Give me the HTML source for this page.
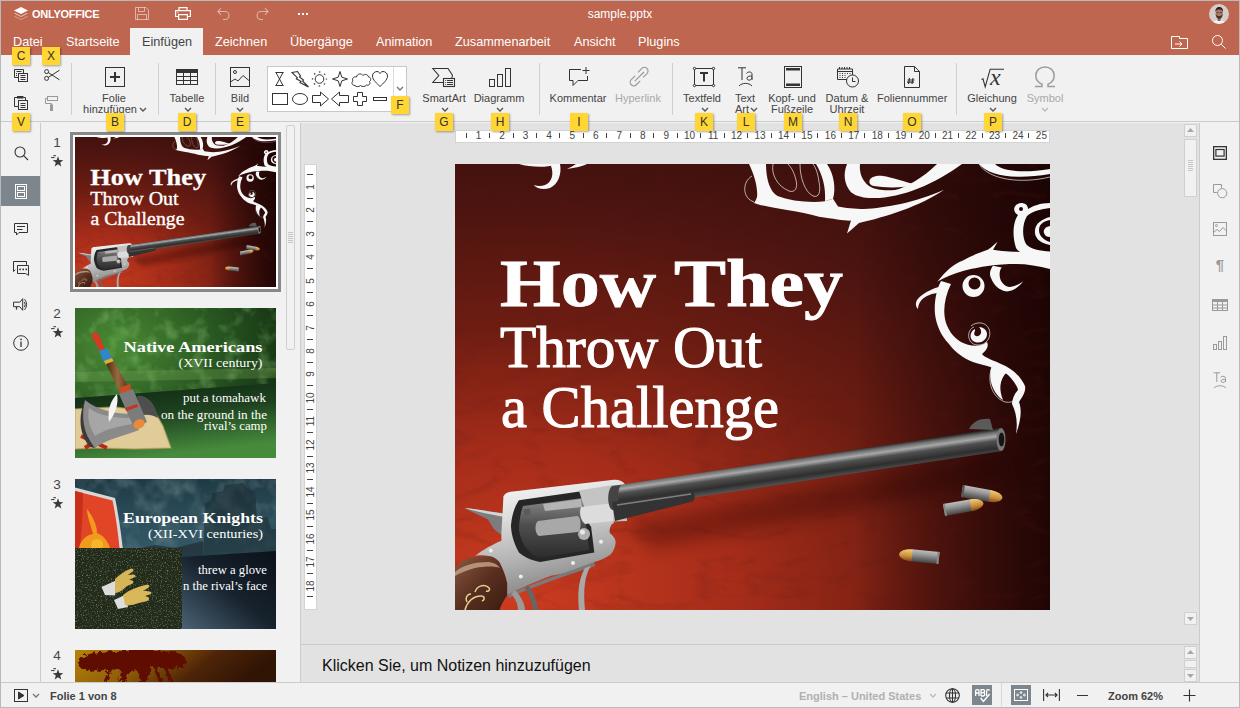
<!DOCTYPE html>
<html><head><meta charset="utf-8">
<style>
*{box-sizing:border-box;margin:0;padding:0}
html,body{width:1240px;height:708px;overflow:hidden;background:#f1f1f1;font-family:"Liberation Sans",sans-serif;}
.a{position:absolute}
#frame{position:absolute;left:0;top:0;width:1240px;height:708px;border:1px solid #b9b9b9;pointer-events:none;z-index:100}
#hdr{left:0;top:0;width:1240px;height:55px;background:#be664f}
.tab{position:absolute;top:34.6px;font-size:12.7px;color:#fff;white-space:nowrap}
#tabact{left:130px;top:28px;width:73px;height:27px;background:#f1f1f1}
#tb{left:0;top:55px;width:1240px;height:67px;background:#f1f1f1;border-bottom:1px solid #cbcbcb}
.sep{position:absolute;top:63px;width:1px;height:52px;background:#d0d0d0}
.lbl{position:absolute;font-size:11px;color:#444;white-space:nowrap;line-height:11px;text-align:center}
.dis{color:#a9a9a9}
.kt{position:absolute;width:18px;height:18px;background:#ffd633;color:#333;font-size:12px;line-height:18px;text-align:center;box-shadow:1px 1px 2px rgba(0,0,0,.35);z-index:50}
.chev{position:absolute;width:8px;height:5px;stroke-width:1.4}
svg{position:absolute;overflow:visible}
.sn{position:absolute;left:49px;width:16px;text-align:center;font-size:13.5px;line-height:14px;color:#444}
.rn{position:absolute;width:20px;height:10px;text-align:center;font-size:10px;line-height:10px;color:#444}
#side{left:0;top:123px;width:41px;height:559px;background:#f1f1f1;border-right:1px solid #cbcbcb}
#thumbs{left:41px;top:123px;width:260px;height:559px;background:#f1f1f1;border-right:1px solid #cbcbcb;overflow:hidden}
#canvas{left:301px;top:123px;width:898px;height:521px;background:#e2e2e2}
#notes{left:301px;top:644px;width:898px;height:38px;background:#e2e2e2;border-top:1px solid #cbcbcb}
#rpanel{left:1199px;top:123px;width:41px;height:559px;background:#f1f1f1;border-left:1px solid #cbcbcb}
#status{left:0;top:682px;width:1240px;height:26px;background:#f1f1f1;border-top:1px solid #cbcbcb}
</style></head><body>
<div id="frame"></div>
<svg width="0" height="0" style="position:absolute;left:0;top:0">
<defs>
  <radialGradient id="s1bg" cx="60" cy="430" r="760" gradientUnits="userSpaceOnUse" gradientTransform="translate(60 430) scale(1 0.64) translate(-60 -430)">
    <stop offset="0" stop-color="#cc3c20"/>
    <stop offset="0.3" stop-color="#a42c19"/>
    <stop offset="0.55" stop-color="#6e1d12"/>
    <stop offset="0.8" stop-color="#4c1410"/>
    <stop offset="1" stop-color="#3a0f0c"/>
  </radialGradient>
  <linearGradient id="s1top" gradientUnits="userSpaceOnUse" x1="400" y1="0" x2="595" y2="0">
    <stop offset="0" stop-color="#180303" stop-opacity="0"/>
    <stop offset="0.5" stop-color="#180303" stop-opacity=".45"/>
    <stop offset="1" stop-color="#180303" stop-opacity=".88"/>
  </linearGradient>
  <linearGradient id="barrel" gradientUnits="userSpaceOnUse" x1="350" y1="292" x2="353.5" y2="317">
    <stop offset="0" stop-color="#2a2a2a"/>
    <stop offset="0.12" stop-color="#6e6e6e"/>
    <stop offset="0.28" stop-color="#a8a8a8"/>
    <stop offset="0.45" stop-color="#505050"/>
    <stop offset="0.75" stop-color="#2e2e2e"/>
    <stop offset="1" stop-color="#555"/>
  </linearGradient>
  <linearGradient id="gframe" x1="0" y1="0" x2="0.3" y2="1">
    <stop offset="0" stop-color="#ffffff"/>
    <stop offset="0.35" stop-color="#dedede"/>
    <stop offset="0.7" stop-color="#b4b4b4"/>
    <stop offset="1" stop-color="#8a8a8a"/>
  </linearGradient>
  <linearGradient id="cyl" x1="0" y1="0" x2="0" y2="1">
    <stop offset="0" stop-color="#8a8a8a"/>
    <stop offset="0.45" stop-color="#4e4e4e"/>
    <stop offset="1" stop-color="#2c2c2c"/>
  </linearGradient>
  <linearGradient id="grip" x1="0" y1="0" x2="1" y2="1">
    <stop offset="0" stop-color="#8a5a44"/>
    <stop offset="0.5" stop-color="#5a3020"/>
    <stop offset="1" stop-color="#3a1c10"/>
  </linearGradient>
  <linearGradient id="bul" x1="0" y1="0" x2="0" y2="1">
    <stop offset="0" stop-color="#bdbdbd"/>
    <stop offset="0.35" stop-color="#9a9a9a"/>
    <stop offset="0.7" stop-color="#6a6a6a"/>
    <stop offset="1" stop-color="#454545"/>
  </linearGradient>
  <linearGradient id="tip" x1="0" y1="0" x2="0" y2="1">
    <stop offset="0" stop-color="#f5cf7a"/>
    <stop offset="0.6" stop-color="#c98d3a"/>
    <stop offset="1" stop-color="#7a4a18"/>
  </linearGradient>
  <filter id="s1tex" x="0" y="0" width="100%" height="100%">
    <feTurbulence type="turbulence" baseFrequency="0.012 0.03" numOctaves="4" seed="9"/>
    <feColorMatrix type="matrix" values="0 0 0 0 0.1  0 0 0 0 0.01  0 0 0 0 0.01  0 0 0 -2.2 0.55"/>
  </filter>
  <filter id="blur8" x="-20%" y="-50%" width="140%" height="200%"><feGaussianBlur stdDeviation="8"/></filter>
  <symbol id="star" viewBox="0 0 13 12"><path d="M7.00 1.30 L8.35 5.04 L12.33 5.17 L9.19 7.61 L10.29 11.43 L7.00 9.20 L3.71 11.43 L4.81 7.61 L1.67 5.17 L5.65 5.04 Z" fill="#3a3a3a"/><path d="M2.3 0.7 H5 M0 2.6 H3.6" stroke="#3a3a3a" stroke-width="1"/></symbol>
  <symbol id="slide1" viewBox="0 0 595 446">
    <rect width="595" height="446" fill="url(#s1bg)"/>
    <rect width="595" height="446" fill="url(#s1top)"/>
    <rect width="595" height="446" filter="url(#s1tex)" opacity=".35"/>
    <!-- shadow under barrel -->
    <path d="M170 360 L545 292 L560 312 L200 385 Z" fill="#1a0303" opacity=".3" filter="url(#blur8)"/>

    <!-- ORNAMENTS -->
    <g fill="#f7f7f7" stroke="none">
      <!-- top-left hook -->
      <path d="M64 0 C74 3 90 4 100 1 L104 0 Z"/>
      <path d="M96 2 C99 10 97 18 90 21 C86 22.5 82 22 78.7 21 C82 24.5 88 26.5 95 24 C103 20.5 107 10 105 0 L97 0 Z"/>
      <path d="M112 5 C120 4 128 2 132 0 L121 0 C118 2 115 3.5 112 5 Z"/>
      <!-- top flourish band A -->
      <path d="M294 0 C300 12 303 25 302 33 C301 36 300 38 299 39 C312 44 340 46 364 52.8 C380 55 390 57 396 56.6 L392 69.5 L404 59 C430 53 466 42 489 25.7 C462 38 430 44 409 45 C400 45 390 44 383 42.5 L378 34.7 L370 37.3 C355 39 335 37 322.6 32 C315 28 311 15 311 0 Z"/>
      <!-- band B -->
      <path d="M361 0 C367 10 371 22 370 37.3 L378 34.7 C381 25 379 10 372 0 Z"/>
      <!-- band C -->
      <path d="M392 0 C388 10 389 20 396 28.3 C402 33 410 34 416 34 C445 35 480 20 507 0 L482 0 C468 14 450 24 440 26 C430 27 420 26 414 22 C407 17 404 8 405 0 Z"/>
      <!-- teardrop -->
      <path d="M418 13 C413 15 413 21 419 22 C430 24 448 24 462 21 C450 18 436 13 428 12 C424 11.5 421 12 418 13 Z"/>
      <!-- top right crescent -->
      <path d="M524 0 C534 12 560 16 595 10 L595 5 C570 9 548 8 540 0 Z"/>
      <!-- R1 big loop (right edge) -->
      <path d="M566 39 C558 40 557 48 563 51 C558 58 557 72 561 84 C566 92 580 92 595 92.8 L595 87.5 C585 87 575 85 571 80 C567 73 567 60 572 52 C578 47 586 45 595 44 L595 39 C585 39 578 42 573 45 C573 41 570 39 566 39 Z"/>
      <circle cx="566" cy="45" r="2" fill="#2a0606"/>
      <path d="M595 53 C587 55 581 59 580 66 C579 73 584 79 595 81 L595 78 C589 76 584 72 584 66 C584 60 589 57 595 56 Z"/>
      <path d="M595 62 C590 63 588 66 589 69 C590 72 592 73 595 73 Z"/>
      <!-- R2 main horizontal band -->
      <path d="M482.4 117.6 C490 108 498 100 508 96.4 C516 92 526 88 532.7 85.8 C537 83 540 80 542.5 77.8 C541 81 539 84 538 85.8 C545 87 550 87.5 554 87.5 C570 88 584 89 595 90 L595 105 C584 102 572 100 561 100 C552 100 542 100.5 534.5 101.7 C525 103 515 105 508 107 C498 110 490 113 482.4 117.6 Z"/>
      <!-- R3 C crescent -->
      <path d="M538 101.7 C535 106 534 110 536 114 C539 122 545 126 550.4 127.3 C556 128 563 124 568 117.6 C563 121 558 123 554 122.9 C549 122 546 118 545 114 C544 109 545 105 546.9 103.4 Z"/>
      <!-- R4 small spiral -->
      <path fill-rule="evenodd" d="M507.5 122 A11 11 0 1 0 529.5 122 A11 11 0 1 0 507.5 122 Z M513.5 119.5 A6 6 0 1 1 525.5 119.5 A6 6 0 1 1 513.5 119.5 Z"/>
      <!-- R5 left curl -->
      <path d="M494 121 C482 122 468 128 462 136 C460 140 461 143 463 145 C463 140 466 135 472 132 C478 129 486 128 492 128 Z"/>
      <!-- R6 descending band -->
      <path d="M486 117 C481 126 479 140 480 150 C481 160 486 172 494 180 C500 188 508 194 518 198 C530 202 545 204 553 211 C560 218 563 224 563 226 C559 230 557 236 557 240 C561 248 563 258 561 270 C566 256 567 246 564 238 C568 232 571 227 570 222 C566 212 556 204 546 200 C538 196 530 194 527 190 C532 186 534 182 532 178 C524 184 514 182 506 178 C498 173 492 165 490 155 C488 145 490 132 496 120 Z"/>
      <!-- inner hanging teardrop -->
      <path d="M537 201 C533 212 536 228 548 236 C544 226 544 216 552 208 C547 206 541 204 537 201 Z"/>
      <!-- small spiral lower -->
      <path d="M520 165 C514 168 514 176 520 178 C526 180 532 176 532 170 C532 166 528 163 524 163 C527 166 527 171 523 172 C520 173 518 170 520 167 Z"/>
    </g>
    <g fill="none" stroke="#eeeeee" stroke-width=".7">
      <path d="M297 12 C287 18 287 34 299 38"/>
      <path d="M318 0 C316 10 322 22 334 27 C340 29 343 24 341 16 C339 8 336 3 333 0"/>
      <path d="M345 0 C345 14 350 28 358 32 C364 34 366 28 364 18 C363 10 361 4 358 0"/>
      <path d="M524 0 C534 16 566 20 595 13"/>
      <path d="M585 60 C577 66 580 78 595 80"/>
      <path d="M538 201 C532 212 534 232 550 238 C560 240 566 232 566 226"/>
      <path d="M519 163 C511 166 512 180 522 181 C532 182 537 172 534 165 C531 158 522 157 516 162"/>
    </g>

    <!-- TEXT -->
    <g fill="#fff" stroke="#fff" font-family="Liberation Serif, serif">
      <text x="45" y="142" stroke-width="0.8" font-size="68" font-weight="bold" textLength="343" lengthAdjust="spacingAndGlyphs">How They</text>
      <text x="45" y="203" stroke-width="1.1" font-size="59" textLength="262" lengthAdjust="spacingAndGlyphs">Throw Out</text>
      <text x="46" y="262.5" stroke-width="1.1" font-size="59" textLength="278" lengthAdjust="spacingAndGlyphs">a Challenge</text>
    </g>

    <!-- REVOLVER -->
    <!-- hammer -->
    <path d="M9.7 344 C20 345 38 348 50.3 349.7 L48 372 C44 369 41 367 38.7 365 C36 360 34 357 32.9 355.5 C24 351 16 348 9.7 344 Z" fill="#7d7d7d"/>
    <path d="M9.7 344 C20 345 38 348 50.3 349.7 L50 353 C38 351 22 348 9.7 344 Z" fill="#d5d5d5"/>
    <!-- grip -->
    <path d="M0 404 C5 398 10 395 15.5 394.2 C22 393 30 392 34.8 392.3 C40 393 43 395 44.5 398 C48 405 51 412 52.3 419.4 L52.3 431 C49 436 46 441 44.5 446 L0 446 Z" fill="url(#grip)"/>
    <path d="M0 408 C8 401 20 398 34 398 C40 399 43 401 45 404 C40 402 30 402 20 404 C12 406 5 409 0 412 Z" fill="#c8a48a" opacity=".8"/>
    <path d="M10 446 C12 438 18 432 26 432 C30 432 30 436 27 437 M20 428 C22 422 28 420 33 423 C36 425 34 428 31 427 M12 438 C10 434 12 430 16 430" stroke="#e3cf94" stroke-width="1.5" fill="none"/>
    <!-- frame -->
    <path d="M48.4 332.3 C50 329 54 327.4 58 327.4 L158.7 315.8 C164 315.5 168 317 170.3 320.7 L172 357 L158.7 357.4 C155 362 154 366 154.8 369 C158 372 161 375 160.6 378.7 C160 385 157 390 152.9 392.3 C148 395 144 397 139.3 398 L135.5 404 C118 408 106 410 96.8 411.6 C80 418 66 424 52.3 431 L52.3 419.4 C51 412 48 405 44.5 398 C40 393 36 392 34.8 392.3 C28 391 22 391 19.4 392.3 C28 386 38 380 46.4 376.8 L46.4 369 C47 356 48 344 48.4 332.3 Z" fill="url(#gframe)"/>
    <path d="M52.3 431 C80 418 110 409 139.3 398 L140 402 C110 412 80 422 54 434 Z" fill="#7a7a7a"/>
    <!-- trigger guard -->
    <path d="M135.5 402 C130 412 128 425 130 446 L124 446 C122 428 124 414 130 404 Z" fill="#a8a8a8"/>
    <path d="M60 426 C66 432 70 440 70 446 L63 446 C63 440 60 434 56 430 Z" fill="#9a9a9a"/>
    <path d="M73 421 C78 428 82 436 83 446 L78 446 C77 438 74 430 70 424 Z" fill="#666"/>
    <!-- cylinder window -->
    <path d="M63.9 336.2 L131.6 326.5 L139.3 388.4 L85.2 398 C75 396 68 392 63.9 388.4 C58 378 56 368 56 361.3 C57 350 60 342 63.9 336.2 Z" fill="#262626"/>
    <path d="M68 342 L128 334 L134 386 L84 394 C74 390 66 380 64 366 C64 356 66 348 68 342 Z" fill="url(#cyl)"/>
    <path d="M83 357 L122 352 C126 352 127 365 123 368 L84 372 C80 370 79 360 83 357 Z" fill="#a8a8a8"/>
    <path d="M88 340 L126 335 L127 343 L90 347 Z" fill="#b4b4b4"/>
    <circle cx="129" cy="370" r="6" fill="#b0b0b0"/>
    <circle cx="127.5" cy="368" r="2.5" fill="#e8e8e8"/>
    <path d="M123.9 326.5 L158.7 321 L158.7 359.4 L135 362 Z" fill="#c4c4c4"/>
    <path d="M126 343 L158 339 L158 357 L130 360 C125 356 124 348 126 343 Z" fill="#dcdcdc"/>
    <rect x="69" y="345" width="6" height="6" fill="#5a5a5a" transform="rotate(-8 72 348)"/>
    <!-- barrel -->
    <path d="M157 322 L545 264 C549 264 550 286 547 287 L157 346 Z" fill="url(#barrel)"/>
    <path d="M157 322 C152 326 152 342 157 346 L166 345 C162 340 162 326 166 321 Z" fill="#444"/>
    <path d="M157 338 L236 327 C241 328 241 337 236 338 L160 357 Z" fill="#333"/>
    <path d="M162 341 L236 330" stroke="#808080" stroke-width="1.6"/>
    <path d="M514 265 C518 257 526 254 535 255 L538 266 Z" fill="#5a5a5a"/>
    <ellipse cx="546" cy="275.5" rx="4.5" ry="11.5" fill="#777"/>
    <ellipse cx="546.5" cy="275.5" rx="2.8" ry="7" fill="#141414"/>
    <!-- screws -->
    <circle cx="35.8" cy="386.5" r="2" fill="#eee"/><circle cx="65.8" cy="412.6" r="2" fill="#eee"/><circle cx="118" cy="399" r="2" fill="#eee"/><circle cx="146" cy="377.8" r="2" fill="#eee"/>

    <!-- BULLETS -->
    <g transform="translate(507 327) rotate(10)">
      <rect x="0" y="-6" width="29" height="12" fill="url(#bul)"/>
      <rect x="0" y="-6" width="2" height="12" fill="#555"/>
      <path d="M28 -6 C36 -6 41 -3 41 0 C41 3 36 6 28 6 Z" fill="url(#tip)"/>
    </g>
    <g transform="translate(489 346) rotate(-10)">
      <rect x="0" y="-6" width="28" height="12" fill="url(#bul)"/>
      <rect x="0" y="-6" width="2" height="12" fill="#888"/>
      <path d="M27 -6 C35 -6 40 -3 40 0 C40 3 35 6 27 6 Z" fill="url(#tip)"/>
    </g>
    <g transform="translate(484 394) rotate(185.5)">
      <rect x="0" y="-6" width="28" height="12" fill="url(#bul)" transform="scale(1 -1)"/>
      <rect x="0" y="-6" width="2" height="12" fill="#888"/>
      <path d="M27 -6 C35 -6 40 -3 40 0 C40 3 35 6 27 6 Z" fill="url(#tip)" transform="scale(1 -1)"/>
    </g>
  </symbol>
</defs>
</svg>


<!-- HEADER -->
<div class="a" id="hdr"></div>
<div class="a" id="tabact"></div>
<!-- HEADER CONTENT -->
<svg style="left:13px;top:6px" width="16" height="16" viewBox="0 0 16 16">
  <path d="M8 1 L15 4.5 L8 8 L1 4.5 Z" fill="#fff"/>
  <path d="M2.2 7 L8 9.9 L13.8 7 L15 7.6 L8 11.1 L1 7.6 Z" fill="#fff" opacity=".6"/>
  <path d="M2.2 10 L8 12.9 L13.8 10 L15 10.6 L8 14.1 L1 10.6 Z" fill="#fff" opacity=".35"/>
</svg>
<div class="a" style="left:32px;top:8px;font-size:11px;line-height:13px;font-weight:bold;color:#fff;letter-spacing:-0.25px">ONLYOFFICE</div>
<!-- save -->
<svg style="left:135px;top:7px" width="14" height="13" viewBox="0 0 14 13" fill="none" stroke="#fff" stroke-opacity=".5" stroke-width="1">
  <path d="M0.5 0.5 H11 L13.5 3 V12.5 H0.5 Z"/><path d="M3.5 0.5 V4.5 H9.5 V0.5"/><path d="M2.5 12.5 V7.5 H11.5 V12.5"/>
</svg>
<!-- print -->
<svg style="left:175px;top:7px" width="16" height="13" viewBox="0 0 16 13" fill="none" stroke="#fff" stroke-width="1.2">
  <path d="M4 3.5 V0.6 H12 V3.5"/><path d="M3.5 9.5 H0.6 V3.6 H15.4 V9.5 H12.5"/><path d="M3.6 7.6 H12.4 V12.4 H3.6 Z"/><circle cx="3" cy="5.6" r=".6" fill="#fff" stroke="none"/>
</svg>
<!-- undo -->
<svg style="left:217px;top:7px" width="13" height="13" viewBox="0 0 13 13" fill="none" stroke="#fff" stroke-opacity=".5" stroke-width="1.1">
  <path d="M4 1 L1 4.5 L4 8"/><path d="M1 4.5 H8 A4 4 0 0 1 8 12.5 H6"/>
</svg>
<!-- redo -->
<svg style="left:256px;top:7px" width="13" height="13" viewBox="0 0 13 13" fill="none" stroke="#fff" stroke-opacity=".5" stroke-width="1.1">
  <path d="M9 1 L12 4.5 L9 8"/><path d="M12 4.5 H5 A4 4 0 0 0 5 12.5 H7"/>
</svg>
<!-- dots -->
<div class="a" style="left:298px;top:13px;width:2px;height:2px;background:#fff;box-shadow:4px 0 #fff,8px 0 #fff"></div>
<div class="a" style="left:0;top:7px;width:1240px;text-align:center;font-size:12px;color:#fff">sample.pptx</div>
<!-- avatar -->
<svg style="left:1209px;top:4px" width="20" height="20" viewBox="0 0 20 20">
  <defs><clipPath id="avc"><circle cx="10" cy="10" r="10"/></clipPath></defs>
  <g clip-path="url(#avc)">
    <rect width="20" height="20" fill="#d6cdca"/>
    <path d="M2 22 C3 17 7 16 10 16 C13 16 17 17 18 22 Z" fill="#f3f0ef"/>
    <rect x="8.7" y="13" width="2.8" height="4" fill="#8a6252"/>
    <ellipse cx="10.2" cy="9.5" rx="3.6" ry="5" fill="#a67c69"/>
    <path d="M6.6 9.5 C6.8 12.5 8 15 10.2 15 C12.4 15 13.6 12.5 13.8 9.5 C13 11.5 12 12 10.2 12 C8.4 12 7.4 11.5 6.6 9.5 Z" fill="#4e3328"/>
    <path d="M6.4 8 C6.2 4.5 8 3 10.3 3 C12.6 3 14.3 4.5 14 8 C13 6 12 5.6 10.2 5.6 C8.4 5.6 7.4 6 6.4 8 Z" fill="#2f211b"/>
    <path d="M7.3 8.6 H9.6 M10.8 8.6 H13.1" stroke="#3a2a22" stroke-width=".7"/>
  </g>
</svg>
<!-- folder -->
<svg style="left:1171px;top:36px" width="17" height="13" viewBox="0 0 17 13" fill="none" stroke="#fff" stroke-width="1">
  <path d="M0.5 0.5 H8.5 V2.5 H16.5 V12.5 H0.5 Z"/><path d="M4 8 H11"/><path d="M8.5 5.5 L11 8 L8.5 10.5"/>
</svg>
<!-- search -->
<svg style="left:1212px;top:35px" width="14" height="14" viewBox="0 0 14 14" fill="none" stroke="#fff" stroke-width="1">
  <circle cx="5.5" cy="5.5" r="5"/><path d="M9.2 9.2 L13.5 13.5"/>
</svg>

<div class="tab" style="left:13px">Datei</div>
<div class="tab" style="left:66px">Startseite</div>
<div class="tab" style="left:142px;color:#444">Einfügen</div>
<div class="tab" style="left:215px">Zeichnen</div>
<div class="tab" style="left:290px">Übergänge</div>
<div class="tab" style="left:376px">Animation</div>
<div class="tab" style="left:455px">Zusammenarbeit</div>
<div class="tab" style="left:574px">Ansicht</div>
<div class="tab" style="left:638px">Plugins</div>


<!-- TOOLBAR -->
<div class="a" id="tb"></div>
<!-- TOOLBAR CONTENT -->
<!-- copy -->
<svg style="left:14px;top:69px" width="15" height="14" viewBox="0 0 15 14" fill="none" stroke="#333" stroke-width="1">
  <path d="M4 8.5 H0.5 V0.5 H9.5 V4"/><path d="M2.5 2.5 H7.5"/><rect x="2" y="4" width="1" height="1" fill="#333" stroke="none"/><rect x="2" y="6" width="1" height="1" fill="#333" stroke="none"/>
  <rect x="4.5" y="4.5" width="9" height="8" fill="#f1f1f1"/><path d="M6.5 6.5 H11.5 M6.5 8.5 H11.5 M6.5 10.5 H11.5"/>
</svg>
<!-- paste -->
<svg style="left:14px;top:96px" width="15" height="15" viewBox="0 0 15 15" fill="none" stroke="#333" stroke-width="1">
  <path d="M3 1.5 H0.5 V10.5 H4"/><path d="M9.5 1.5 H11.5 V4.5"/><rect x="3" y="0" width="6.5" height="2.5" fill="#333" stroke="none"/>
  <rect x="4.5" y="4.5" width="9" height="9" fill="#f1f1f1"/><path d="M6.5 7.5 H11.5 M6.5 9.5 H11.5 M6.5 11.5 H11.5"/>
</svg>
<!-- scissors -->
<svg style="left:44px;top:69px" width="16" height="12" viewBox="0 0 16 12" fill="none" stroke="#333" stroke-width="1">
  <circle cx="2.6" cy="2.6" r="2"/><circle cx="2.6" cy="9.4" r="2"/><path d="M4.3 3.6 L15.5 10.8 M4.3 8.4 L15.5 1.2"/>
</svg>
<!-- format painter -->
<svg style="left:45px;top:96px" width="13" height="15" viewBox="0 0 13 15" fill="none" stroke="#999" stroke-width="1">
  <rect x="2.5" y="0.5" width="10" height="4"/><path d="M2.5 2.5 H0.5 V7.5 H6.5 V9"/><rect x="5.5" y="9" width="2" height="5.5" fill="#999"/>
</svg>
<div class="sep" style="left:71px"></div>
<!-- add slide -->
<svg style="left:105px;top:67px" width="20" height="20" viewBox="0 0 20 20" fill="none" stroke="#333">
  <rect x="0.5" y="0.5" width="19" height="19"/><path d="M10 5 V15 M5 10 H15" stroke-width="2"/>
</svg>
<div class="lbl" style="left:84px;top:93px;width:60px">Folie</div>
<div class="lbl" style="left:80px;top:104px;width:60px">hinzufügen</div>
<svg class="chev" style="left:139px;top:107px" viewBox="0 0 8 5" fill="none" stroke="#555"><path d="M1 1 L4 4 L7 1"/></svg>
<div class="sep" style="left:158px"></div>
<!-- table -->
<svg style="left:176px;top:69px" width="22" height="16" viewBox="0 0 22 16" fill="none" stroke="#333">
  <rect x="0.5" y="0.5" width="21" height="15"/><rect x="0.5" y="0.5" width="21" height="3" fill="#333"/><path d="M0.5 7.5 H21.5 M0.5 11.5 H21.5 M7.5 3.5 V15.5 M14.5 3.5 V15.5"/>
</svg>
<div class="lbl" style="left:157px;top:93px;width:60px">Tabelle</div>
<svg class="chev" style="left:184px;top:107px" viewBox="0 0 8 5" fill="none" stroke="#555"><path d="M1 1 L4 4 L7 1"/></svg>
<div class="sep" style="left:215px"></div>
<!-- image -->
<svg style="left:230px;top:67px" width="20" height="20" viewBox="0 0 20 20" fill="none" stroke="#333">
  <rect x="0.5" y="0.5" width="19" height="19"/><circle cx="5" cy="5" r="1.5"/><path d="M0.5 15 L5 12 L8 14 L13 8.5 L19.5 14"/>
</svg>
<div class="lbl" style="left:210px;top:93px;width:60px">Bild</div>
<svg class="chev" style="left:236px;top:107px" viewBox="0 0 8 5" fill="none" stroke="#555"><path d="M1 1 L4 4 L7 1"/></svg>
<!-- shapes gallery -->
<div class="a" style="left:267px;top:66px;width:140px;height:46px;background:#fff;border:1px solid #c8c8c8"></div>
<div class="a" style="left:393px;top:67px;width:1px;height:44px;background:#dcdcdc"></div>
<svg class="chev" style="left:396px;top:86px" viewBox="0 0 8 5" fill="none" stroke="#777"><path d="M1 1 L4 4 L7 1"/></svg>
<svg style="left:267px;top:66px" width="140" height="46" viewBox="0 0 140 46" fill="none" stroke="#333" stroke-width="1">
  <!-- hourglass -->
  <path d="M8.5 6.5 H16.5 M8.5 19.5 H16.5 M9 6.5 L16 19.5 M16 6.5 L9 19.5"/>
  <!-- lightning -->
  <path d="M25 6.5 L30.5 5.5 L33.5 10 L32.5 11 L36.5 14 L35.5 15 L41.5 21 L33 16.5 L34 15.3 L29.3 12.8 L30.3 11.7 Z" stroke-width="1.1"/>
  <!-- sun -->
  <circle cx="52.5" cy="13" r="4.3"/>
  <circle cx="52.5" cy="13" r="7" stroke-width="1.3" stroke-dasharray="1.6 3.9" stroke-dashoffset="0.8" stroke="#555"/>
  <!-- star4 -->
  <path d="M73 5.5 L74.8 11.2 L80.5 13 L74.8 14.8 L73 20.5 L71.2 14.8 L65.5 13 L71.2 11.2 Z"/>
  <!-- cloud -->
  <path d="M88 19.5 C85 19.5 84 16.5 86 15 C84.5 12.5 87 10 89.5 11 C90 7.5 94.5 7 96 9.5 C98 7.5 101 8.5 101.5 11 C104 11 104.5 14.5 102.5 15.5 C104 18 101.5 20 99.5 19 C98 21 95 21 93.5 19.5 C92 21 89 21 88 19.5 Z"/>
  <!-- heart -->
  <path d="M113 20.5 C110 17.5 105.5 14 105.5 10 C105.5 7 108 5.5 110 5.5 C111.5 5.5 112.5 6.5 113 7.5 C113.5 6.5 114.5 5.5 116 5.5 C118 5.5 120.5 7 120.5 10 C120.5 14 116 17.5 113 20.5 Z"/>
  <!-- rect -->
  <rect x="5.5" y="27.5" width="15" height="11"/>
  <!-- ellipse -->
  <ellipse cx="33" cy="33" rx="7.5" ry="5.5"/>
  <!-- right arrow -->
  <path d="M45.5 29.5 H53.5 V26 L61.5 33 L53.5 40 V36.5 H45.5 Z"/>
  <!-- left arrow -->
  <path d="M81.5 29.5 H72.5 V26 L64.5 33 L72.5 40 V36.5 H81.5 Z"/>
  <!-- plus -->
  <path d="M90.5 26.5 H95.5 V30.5 H99.5 V35.5 H95.5 V39.5 H90.5 V35.5 H86.5 V30.5 H90.5 Z"/>
  <!-- minus -->
  <rect x="106.5" y="31.5" width="13" height="3"/>
</svg>
<!-- smartart -->
<svg style="left:432px;top:68px" width="24" height="19" viewBox="0 0 24 19" fill="none" stroke="#333" stroke-width="1.1">
  <path d="M11.5 14.5 H0.8 L6.8 7.5 L0.8 0.5 H16 L20.3 7 Q20.8 8.5 19.5 10.5"/><rect x="11.5" y="10.5" width="11" height="8"/><path d="M13.3 12.5 h.8 M15 12.5 h6 M13.3 14.5 h.8 M15 14.5 h6 M13.3 16.5 h.8 M15 16.5 h6"/>
</svg>
<div class="lbl" style="left:414px;top:93px;width:60px">SmartArt</div>
<svg class="chev" style="left:441px;top:107px" viewBox="0 0 8 5" fill="none" stroke="#555"><path d="M1 1 L4 4 L7 1"/></svg>
<!-- chart -->
<svg style="left:489px;top:68px" width="22" height="19" viewBox="0 0 22 19" fill="none" stroke="#333">
  <rect x="0.5" y="11.5" width="5" height="7"/><rect x="8.5" y="6.5" width="5" height="12"/><rect x="16.5" y="0.5" width="5" height="18"/>
</svg>
<div class="lbl" style="left:469px;top:93px;width:60px">Diagramm</div>
<svg class="chev" style="left:496px;top:107px" viewBox="0 0 8 5" fill="none" stroke="#555"><path d="M1 1 L4 4 L7 1"/></svg>
<div class="sep" style="left:539px"></div>
<!-- comment -->
<svg style="left:569px;top:67px" width="21" height="20" viewBox="0 0 21 20" fill="none" stroke="#333">
  <path d="M12 2.5 H0.5 V13.5 H4 V18.5 L9 13.5 H18.5 V9"/><path d="M17 0 V7 M13.5 3.5 H20.5"/>
</svg>
<div class="lbl" style="left:548px;top:93px;width:60px">Kommentar</div>
<!-- hyperlink -->
<svg style="left:627px;top:65px" width="24" height="24" viewBox="0 0 24 24" fill="none" stroke="#9a9a9a" stroke-width="1.2">
  <path d="M11 7.3 L14.85 3.45 A3.6 3.6 0 0 1 19.95 8.55 L16.1 12.4"/>
  <path d="M13.2 15.9 L9.35 19.75 A3.6 3.6 0 0 1 4.25 14.65 L8.1 10.8"/>
  <path d="M7.8 16.2 L17 7"/>
</svg>
<div class="lbl dis" style="left:608px;top:93px;width:60px">Hyperlink</div>
<div class="sep" style="left:672px"></div>
<!-- textfield -->
<svg style="left:693px;top:67px" width="22" height="20" viewBox="0 0 22 20" fill="none" stroke="#333">
  <rect x="1.5" y="1.5" width="19" height="17"/>
  <circle cx="1.5" cy="1.5" r="1.2" fill="#f1f1f1"/><circle cx="20.5" cy="1.5" r="1.2" fill="#f1f1f1"/><circle cx="1.5" cy="18.5" r="1.2" fill="#f1f1f1"/><circle cx="20.5" cy="18.5" r="1.2" fill="#f1f1f1"/>
  <path d="M7 6 H15 M11 6 V14.5" stroke-width="2"/>
</svg>
<div class="lbl" style="left:672px;top:93px;width:60px">Textfeld</div>
<svg class="chev" style="left:701px;top:107px" viewBox="0 0 8 5" fill="none" stroke="#555"><path d="M1 1 L4 4 L7 1"/></svg>
<!-- text art -->
<svg style="left:737px;top:67px" width="17" height="21" viewBox="0 0 17 21" fill="none" stroke="#333" stroke-width="1">
  <path d="M1 0.8 H9 M5 0.8 V13"/>
  <path d="M9.5 6.5 C10 5.5 11 5 12.5 5 C14 5 15 5.7 15 7.3 V13 M15 9 C13 9 10 9 10 11.3 C10 13 12 13.5 13 13 C14 12.5 15 11.5 15 10.5"/>
  <path d="M2 19 C5 15.5 12 15.5 15 19"/>
</svg>
<div class="lbl" style="left:715px;top:93px;width:60px">Text</div>
<div class="lbl" style="left:712px;top:104px;width:60px">Art</div>
<svg class="chev" style="left:750px;top:107px" viewBox="0 0 8 5" fill="none" stroke="#555"><path d="M1 1 L4 4 L7 1"/></svg>
<!-- header/footer -->
<svg style="left:784px;top:66px" width="18" height="22" viewBox="0 0 18 22" fill="none" stroke="#333">
  <rect x="0.5" y="0.5" width="17" height="21"/><rect x="2" y="2" width="14" height="2.5" fill="#333" stroke="none"/><rect x="2" y="17.5" width="14" height="2.5" fill="#333" stroke="none"/>
</svg>
<div class="lbl" style="left:762px;top:93px;width:60px">Kopf- und</div>
<div class="lbl" style="left:762px;top:104px;width:60px">Fußzeile</div>
<!-- date -->
<svg style="left:837px;top:67px" width="23" height="21" viewBox="0 0 23 21" fill="none" stroke="#333">
  <path d="M11 12.5 H0.5 V2 H15.5 V8"/><path d="M0.5 4.5 H15.5" stroke-width="1"/>
  <path d="M2.5 0 V2 M5 0 V2 M7.5 0 V2 M10 0 V2 M12.5 0 V2" />
  <path d="M2.5 6.5 h1 M5 6.5 h1 M7.5 6.5 h1 M10 6.5 h1 M12.5 6.5 h1 M2.5 8.5 h1 M5 8.5 h1 M7.5 8.5 h1 M2.5 10.5 h1 M5 10.5 h1 M7.5 10.5 h1" stroke-width="1"/>
  <circle cx="15.5" cy="14" r="6" fill="#f1f1f1"/><path d="M15.5 10.5 V14.5 H18.5"/>
</svg>
<div class="lbl" style="left:817px;top:93px;width:60px">Datum &amp;</div>
<div class="lbl" style="left:817px;top:104px;width:60px">Uhrzeit</div>
<!-- slide number -->
<svg style="left:904px;top:66px" width="16" height="22" viewBox="0 0 16 22" fill="none" stroke="#333">
  <path d="M0.5 0.5 H10.5 L15.5 5.5 V21.5 H0.5 Z"/><path d="M10.5 0.5 V5.5 H15.5"/>
  <path d="M5.5 12 L4.5 18 M9 12 L8 18 M3.5 14 H10.5 M3 16.2 H10" stroke-width="1.2"/>
</svg>
<div class="lbl" style="left:877px;top:93px;width:60px">Foliennummer</div>
<div class="sep" style="left:956px"></div>
<!-- equation -->
<svg style="left:980px;top:66px" width="26" height="23" viewBox="0 0 26 23" fill="none" stroke="#333">
  <path d="M1.5 13.5 L3 12.8 L5.2 21 L10.2 3.2 H24" stroke-width="1.1"/>
</svg>
<div class="a" style="left:990px;top:65px;font-family:'Liberation Serif',serif;font-style:italic;font-size:24px;line-height:24px;color:#333">x</div>
<div class="lbl" style="left:962px;top:93px;width:60px">Gleichung</div>
<svg class="chev" style="left:989px;top:107px" viewBox="0 0 8 5" fill="none" stroke="#555"><path d="M1 1 L4 4 L7 1"/></svg>
<!-- symbol -->
<svg style="left:1034px;top:66px" width="22" height="22" viewBox="0 0 22 22" fill="none" stroke="#9d9d9d" stroke-width="1.5">
  <path d="M1 20.5 H8 V18.3 C4 16.5 1.8 13 1.8 9.5 C1.8 4.5 5.8 1 11 1 C16.2 1 20.2 4.5 20.2 9.5 C20.2 13 18 16.5 14 18.3 V20.5 H21"/>
</svg>
<div class="lbl dis" style="left:1015px;top:93px;width:60px">Symbol</div>
<svg class="chev" style="left:1041px;top:107px" viewBox="0 0 8 5" fill="none" stroke="#bbb"><path d="M1 1 L4 4 L7 1"/></svg>

<!-- KEYTIPS -->
<div class="kt" style="left:12px;top:47px">C</div>
<div class="kt" style="left:42px;top:47px">X</div>
<div class="kt" style="left:12px;top:113px">V</div>
<div class="kt" style="left:106px;top:113px">B</div>
<div class="kt" style="left:178px;top:113px">D</div>
<div class="kt" style="left:231px;top:113px">E</div>
<div class="kt" style="left:391px;top:96px">F</div>
<div class="kt" style="left:435px;top:113px">G</div>
<div class="kt" style="left:491px;top:113px">H</div>
<div class="kt" style="left:570px;top:113px">I</div>
<div class="kt" style="left:695px;top:113px">K</div>
<div class="kt" style="left:737px;top:113px">L</div>
<div class="kt" style="left:784px;top:113px">M</div>
<div class="kt" style="left:839px;top:113px">N</div>
<div class="kt" style="left:903px;top:113px">O</div>
<div class="kt" style="left:984px;top:113px">P</div>


<!-- LEFT SIDEBAR -->
<div class="a" id="side"></div>
<div class="a" id="thumbs"></div>
<div class="a" id="canvas"></div>
<div class="a" id="notes"></div>
<div class="a" id="rpanel"></div>
<div class="a" id="status"></div>
<!-- LEFT SIDEBAR CONTENT -->
<svg style="left:14px;top:146px" width="15" height="15" viewBox="0 0 15 15" fill="none" stroke="#333" stroke-width="1.1">
  <circle cx="6" cy="6" r="5"/><path d="M9.6 9.6 L14 14"/>
</svg>
<div class="a" style="left:1px;top:176px;width:39px;height:30px;background:#7e868d"></div>
<svg style="left:15px;top:184px" width="12" height="15" viewBox="0 0 12 15" fill="none" stroke="#fff" stroke-width="1">
  <rect x="0.5" y="0.5" width="11" height="14"/><rect x="2.5" y="2.5" width="7" height="4"/><rect x="2.5" y="8.5" width="7" height="4"/>
</svg>
<!-- comment -->
<svg style="left:14px;top:223px" width="14" height="13" viewBox="0 0 14 13" fill="none" stroke="#333" stroke-width="1">
  <path d="M0.5 0.5 H13.5 V9.5 H5 L2.5 12 V9.5 H0.5 Z"/><path d="M3 3.5 H11 M3 6.5 H8.5"/>
</svg>
<!-- chat -->
<svg style="left:13px;top:261px" width="17" height="15" viewBox="0 0 17 15" fill="none" stroke="#333" stroke-width="1">
  <path d="M0.5 10.5 V0.5 H13.5 V3.8 M0.5 10.5 L2.3 8.8"/><path d="M4.5 4.5 H15.5 V14.3 L12.5 12.5 H4.5 Z"/>
  <rect x="6.3" y="7.6" width="1.6" height="1.6" fill="#333" stroke="none"/><rect x="9.4" y="7.6" width="1.6" height="1.6" fill="#333" stroke="none"/><rect x="12.5" y="7.6" width="1.6" height="1.6" fill="#333" stroke="none"/>
</svg>
<!-- megaphone -->
<svg style="left:13px;top:298px" width="17" height="13" viewBox="0 0 17 13" fill="none" stroke="#333" stroke-width="1">
  <path d="M0.5 4.2 H6.8 L9.7 0.7 V12.3 L6.8 8.7 H0.5 Z"/><path d="M3.5 8.7 V11.6" stroke-width="1.2"/><path d="M11.6 1.2 Q15.6 6.5 11.6 11.8 M11.4 4 Q13.2 6.5 11.4 9"/>
</svg>
<!-- info -->
<svg style="left:13px;top:335px" width="16" height="16" viewBox="0 0 16 16" fill="none" stroke="#333" stroke-width="1">
  <circle cx="8" cy="8" r="7.3"/><path d="M8 6.5 V12" stroke-width="1.3"/><circle cx="8" cy="4.3" r=".9" fill="#333" stroke="none"/>
</svg>

<!-- THUMB PANEL scrollbar -->
<div class="a" style="left:286px;top:125px;width:9px;height:225px;border:1px solid #cfcfcf;border-radius:2px;background:#f1f1f1"></div>
<div class="a" style="left:288px;top:232px;width:5px;height:11px;background:repeating-linear-gradient(#c6c6c6 0 1px,transparent 1px 2px)"></div>

<!-- RULERS -->
<div class="a" id="hruler" style="left:455px;top:130px;width:595px;height:13px;background:#fff;border:1px solid #d3d3d3"></div>
<div class="a" id="vruler" style="left:304px;top:164px;width:13px;height:446px;background:#fff;border:1px solid #d3d3d3"></div>

<div class="rn" style="left:468.6px;top:131px">1</div>
<div class="rn" style="left:492.1px;top:131px">2</div>
<div class="rn" style="left:515.5px;top:131px">3</div>
<div class="rn" style="left:539.0px;top:131px">4</div>
<div class="rn" style="left:562.4px;top:131px">5</div>
<div class="rn" style="left:585.9px;top:131px">6</div>
<div class="rn" style="left:609.3px;top:131px">7</div>
<div class="rn" style="left:632.8px;top:131px">8</div>
<div class="rn" style="left:656.2px;top:131px">9</div>
<div class="rn" style="left:679.6px;top:131px">10</div>
<div class="rn" style="left:703.1px;top:131px">11</div>
<div class="rn" style="left:726.5px;top:131px">12</div>
<div class="rn" style="left:750.0px;top:131px">13</div>
<div class="rn" style="left:773.5px;top:131px">14</div>
<div class="rn" style="left:796.9px;top:131px">15</div>
<div class="rn" style="left:820.4px;top:131px">16</div>
<div class="rn" style="left:843.8px;top:131px">17</div>
<div class="rn" style="left:867.2px;top:131px">18</div>
<div class="rn" style="left:890.7px;top:131px">19</div>
<div class="rn" style="left:914.2px;top:131px">20</div>
<div class="rn" style="left:937.6px;top:131px">21</div>
<div class="rn" style="left:961.0px;top:131px">22</div>
<div class="rn" style="left:984.5px;top:131px">23</div>
<div class="rn" style="left:1008.0px;top:131px">24</div>
<div class="rn" style="left:1031.4px;top:131px">25</div>
<div class="a" style="left:465.6px;top:133px;width:1px;height:5px;background:#444"></div>
<div class="a" style="left:489.1px;top:133px;width:1px;height:5px;background:#444"></div>
<div class="a" style="left:512.5px;top:133px;width:1px;height:5px;background:#444"></div>
<div class="a" style="left:536.0px;top:133px;width:1px;height:5px;background:#444"></div>
<div class="a" style="left:559.4px;top:133px;width:1px;height:5px;background:#444"></div>
<div class="a" style="left:582.9px;top:133px;width:1px;height:5px;background:#444"></div>
<div class="a" style="left:606.3px;top:133px;width:1px;height:5px;background:#444"></div>
<div class="a" style="left:629.8px;top:133px;width:1px;height:5px;background:#444"></div>
<div class="a" style="left:653.2px;top:133px;width:1px;height:5px;background:#444"></div>
<div class="a" style="left:676.6px;top:133px;width:1px;height:5px;background:#444"></div>
<div class="a" style="left:700.1px;top:133px;width:1px;height:5px;background:#444"></div>
<div class="a" style="left:723.5px;top:133px;width:1px;height:5px;background:#444"></div>
<div class="a" style="left:747.0px;top:133px;width:1px;height:5px;background:#444"></div>
<div class="a" style="left:770.5px;top:133px;width:1px;height:5px;background:#444"></div>
<div class="a" style="left:793.9px;top:133px;width:1px;height:5px;background:#444"></div>
<div class="a" style="left:817.4px;top:133px;width:1px;height:5px;background:#444"></div>
<div class="a" style="left:840.8px;top:133px;width:1px;height:5px;background:#444"></div>
<div class="a" style="left:864.2px;top:133px;width:1px;height:5px;background:#444"></div>
<div class="a" style="left:887.7px;top:133px;width:1px;height:5px;background:#444"></div>
<div class="a" style="left:911.2px;top:133px;width:1px;height:5px;background:#444"></div>
<div class="a" style="left:934.6px;top:133px;width:1px;height:5px;background:#444"></div>
<div class="a" style="left:958.0px;top:133px;width:1px;height:5px;background:#444"></div>
<div class="a" style="left:981.5px;top:133px;width:1px;height:5px;background:#444"></div>
<div class="a" style="left:1005.0px;top:133px;width:1px;height:5px;background:#444"></div>
<div class="a" style="left:1028.4px;top:133px;width:1px;height:5px;background:#444"></div>
<div class="rn" style="left:300.5px;top:181.8px;transform:rotate(-90deg)">1</div>
<div class="rn" style="left:300.5px;top:205.2px;transform:rotate(-90deg)">2</div>
<div class="rn" style="left:300.5px;top:228.7px;transform:rotate(-90deg)">3</div>
<div class="rn" style="left:300.5px;top:252.1px;transform:rotate(-90deg)">4</div>
<div class="rn" style="left:300.5px;top:275.6px;transform:rotate(-90deg)">5</div>
<div class="rn" style="left:300.5px;top:299.1px;transform:rotate(-90deg)">6</div>
<div class="rn" style="left:300.5px;top:322.5px;transform:rotate(-90deg)">7</div>
<div class="rn" style="left:300.5px;top:346.0px;transform:rotate(-90deg)">8</div>
<div class="rn" style="left:300.5px;top:369.4px;transform:rotate(-90deg)">9</div>
<div class="rn" style="left:300.5px;top:392.9px;transform:rotate(-90deg)">10</div>
<div class="rn" style="left:300.5px;top:416.3px;transform:rotate(-90deg)">11</div>
<div class="rn" style="left:300.5px;top:439.8px;transform:rotate(-90deg)">12</div>
<div class="rn" style="left:300.5px;top:463.2px;transform:rotate(-90deg)">13</div>
<div class="rn" style="left:300.5px;top:486.6px;transform:rotate(-90deg)">14</div>
<div class="rn" style="left:300.5px;top:510.1px;transform:rotate(-90deg)">15</div>
<div class="rn" style="left:300.5px;top:533.5px;transform:rotate(-90deg)">16</div>
<div class="rn" style="left:300.5px;top:557.0px;transform:rotate(-90deg)">17</div>
<div class="rn" style="left:300.5px;top:580.5px;transform:rotate(-90deg)">18</div>
<div class="a" style="left:307px;top:174.3px;width:6px;height:1px;background:#444"></div>
<div class="a" style="left:307px;top:197.8px;width:6px;height:1px;background:#444"></div>
<div class="a" style="left:307px;top:221.2px;width:6px;height:1px;background:#444"></div>
<div class="a" style="left:307px;top:244.7px;width:6px;height:1px;background:#444"></div>
<div class="a" style="left:307px;top:268.1px;width:6px;height:1px;background:#444"></div>
<div class="a" style="left:307px;top:291.6px;width:6px;height:1px;background:#444"></div>
<div class="a" style="left:307px;top:315.0px;width:6px;height:1px;background:#444"></div>
<div class="a" style="left:307px;top:338.5px;width:6px;height:1px;background:#444"></div>
<div class="a" style="left:307px;top:361.9px;width:6px;height:1px;background:#444"></div>
<div class="a" style="left:307px;top:385.4px;width:6px;height:1px;background:#444"></div>
<div class="a" style="left:307px;top:408.8px;width:6px;height:1px;background:#444"></div>
<div class="a" style="left:307px;top:432.2px;width:6px;height:1px;background:#444"></div>
<div class="a" style="left:307px;top:455.7px;width:6px;height:1px;background:#444"></div>
<div class="a" style="left:307px;top:479.1px;width:6px;height:1px;background:#444"></div>
<div class="a" style="left:307px;top:502.6px;width:6px;height:1px;background:#444"></div>
<div class="a" style="left:307px;top:526.0px;width:6px;height:1px;background:#444"></div>
<div class="a" style="left:307px;top:549.5px;width:6px;height:1px;background:#444"></div>
<div class="a" style="left:307px;top:573.0px;width:6px;height:1px;background:#444"></div>
<div class="a" style="left:307px;top:596.4px;width:6px;height:1px;background:#444"></div>
<!-- MAIN SLIDE -->
<svg style="left:455px;top:164px" width="595" height="446"><use href="#slide1"/></svg>
<!-- THUMB 1 -->
<div class="a" style="left:70px;top:132px;width:211px;height:160px;border:3px solid #888;background:#fff"></div>
<svg style="left:75px;top:137px" width="201" height="150" viewBox="0 0 595 446" preserveAspectRatio="none"><use href="#slide1"/></svg>
<!-- SLIDE NUMBERS -->
<div class="sn" style="top:136px">1</div>
<div class="sn" style="top:307px">2</div>
<div class="sn" style="top:478px">3</div>
<div class="sn" style="top:649px">4</div>
<svg style="left:51px;top:155px" width="13" height="12" viewBox="0 0 13 12"><use href="#star"/></svg>
<svg style="left:51px;top:326px" width="13" height="12" viewBox="0 0 13 12"><use href="#star"/></svg>
<svg style="left:51px;top:497px" width="13" height="12" viewBox="0 0 13 12"><use href="#star"/></svg>
<svg style="left:51px;top:668px" width="13" height="12" viewBox="0 0 13 12"><use href="#star"/></svg>

<!-- THUMB 2 -->
<svg style="left:75px;top:308px;overflow:hidden" width="201" height="150" viewBox="0 0 201 150">
  <defs>
    <linearGradient id="t2low" x1="0" y1="0" x2="0.3" y2="1">
      <stop offset="0" stop-color="#0e2410"/><stop offset="0.5" stop-color="#1e4220"/><stop offset="1" stop-color="#468a3c"/>
    </linearGradient>
    <radialGradient id="t2for" cx="0.2" cy="0.25" r="0.95">
      <stop offset="0" stop-color="#4a8a34"/><stop offset="0.5" stop-color="#2a5a22"/><stop offset="1" stop-color="#112a10"/>
    </radialGradient>
    <linearGradient id="t2handle" x1="0" y1="0" x2="1" y2="0">
      <stop offset="0" stop-color="#4a2c16"/><stop offset="0.5" stop-color="#9a6a40"/><stop offset="1" stop-color="#4a2c16"/>
    </linearGradient>
  </defs>
  <filter id="t2tex" x="0" y="0" width="100%" height="100%">
    <feTurbulence type="fractalNoise" baseFrequency="0.06" numOctaves="3" seed="4"/>
    <feColorMatrix type="matrix" values="0 0 0 0 0.35  0 0 0 0 0.7  0 0 0 0 0.25  0 0 0 1.6 -0.75"/>
  </filter>
  <rect width="201" height="150" fill="url(#t2for)"/>
  <rect width="201" height="90" filter="url(#t2tex)" opacity=".55"/>
  <path d="M0 64 L201 60 L201 70 L0 74 Z" fill="#7aa85a" opacity=".3"/>
  <path d="M0 90 L201 75 L201 150 L0 150 Z" fill="url(#t2low)"/>
  <!-- parchment -->
  <path d="M0 101 L40 99 L80 104 L88 118 L96 140 L60 141 L20 140 L0 141 Z" fill="#e0cc98"/><path d="M0 101 L40 99 L80 104 L88 118 L96 140 L60 141 L20 140 L0 141 Z" fill="none" stroke="#b89a5a" stroke-width="1.5" opacity=".6"/>
  <path d="M6 128 L32 140 M10 140 L30 126" stroke="#b52a1a" stroke-width="4"/>
  <!-- axe blade -->
  <path d="M10 92 C22 102 40 106 58 106 L64 122 C48 128 30 132 20 140 C8 126 5 108 10 92 Z" fill="#8a8a8a"/><path d="M14 100 C24 108 40 110 56 110 L58 116 C44 118 28 122 20 128 C14 118 12 110 14 100 Z" fill="#a6a6a6"/>
  <path d="M10 92 C6 108 8 126 20 140 L15 139 C4 126 3 108 10 92 Z" fill="#3a3a3a"/>
  <path d="M62 88 C72 86 81 96 83 110 C76 106 70 106 65 108 Z" fill="#4e4e4e"/>
  <!-- handle -->
  <path d="M16 27 C18 24 22 24 24 27 L30 43 L26 45 Z" fill="#d63a22"/>
  <path d="M24 43 L32 40 L37 51 L29 54 Z" fill="#2f86c8"/>
  <path d="M29 53 L37 50 L39 54 L31 57 Z" fill="#e0b030"/>
  <path d="M31 56 L39 53 L55 82 L46 86 Z" fill="url(#t2handle)"/>
  <path d="M44 80 L55 76 L57 86 L46 89 Z" fill="#d04a20"/>
  <path d="M44 86 L58 81 L72 114 L59 120 Z" fill="#7c7c7c"/>
  <path d="M50 100 L62 96 L63 99 L51 103 Z" fill="#c8341e"/>
  <ellipse cx="64" cy="116" rx="6" ry="4.5" transform="rotate(-25 64 116)" fill="#e88a3a"/>
  <!-- feather -->
  <path d="M42 86 C36 92 32 102 34 114 C40 106 44 96 42 86 Z" fill="#f4f4f4"/>
  <!-- text -->
  <g fill="#fff" font-family="Liberation Serif, serif" text-anchor="end">
    <text x="187.5" y="44.3" font-size="14.6" font-weight="bold" textLength="139" lengthAdjust="spacingAndGlyphs">Native Americans</text>
    <text x="187.5" y="59" font-size="12.8" textLength="84" lengthAdjust="spacingAndGlyphs">(XVII century)</text>
    <text x="191" y="94.4" font-size="13.4" textLength="83" lengthAdjust="spacingAndGlyphs">put a tomahawk</text>
    <text x="192" y="110.7" font-size="13.4" textLength="106" lengthAdjust="spacingAndGlyphs">on the ground in the</text>
    <text x="192" y="122.4" font-size="13.4" textLength="63" lengthAdjust="spacingAndGlyphs">rival’s camp</text>
  </g>
</svg>

<!-- THUMB 3 -->
<svg style="left:75px;top:479px;overflow:hidden" width="201" height="150" viewBox="0 0 201 150">
  <defs>
    <linearGradient id="t3sky" x1="0" y1="0" x2="0" y2="1">
      <stop offset="0" stop-color="#1f3a44"/><stop offset="0.35" stop-color="#2f5360"/><stop offset="0.8" stop-color="#3e6474"/><stop offset="1" stop-color="#2a4550"/>
    </linearGradient>
    <linearGradient id="t3low" x1="1" y1="0" x2="0" y2="1">
      <stop offset="0" stop-color="#0b121a"/><stop offset="0.5" stop-color="#17222d"/><stop offset="1" stop-color="#4a6275"/>
    </linearGradient>
    <filter id="t3tex" x="0" y="0" width="100%" height="100%">
      <feTurbulence type="fractalNoise" baseFrequency="0.8" numOctaves="2" seed="7"/>
      <feColorMatrix type="matrix" values="0 0 0 0 0.45  0 0 0 0 0.52  0 0 0 0 0.36  0 0 0 1.8 -0.98"/>
    </filter>
    <filter id="t3tex2" x="0" y="0" width="100%" height="100%">
      <feTurbulence type="fractalNoise" baseFrequency="0.05" numOctaves="3" seed="3"/>
      <feColorMatrix type="matrix" values="0 0 0 0 0.2  0 0 0 0 0.3  0 0 0 0 0.33  0 0 0 1.4 -0.6"/>
    </filter>
  </defs>
  <rect width="201" height="150" fill="url(#t3sky)"/>
  <rect width="201" height="80" filter="url(#t3tex2)" opacity=".8"/>
  <!-- castle -->
  <path d="M128 80 L130 24 L136 22 L138 14 L148 12 L150 6 L168 4 L172 10 L180 12 L182 40 L192 38 L196 50 L201 50 L201 80 Z" fill="#1c2a30" opacity=".55"/>
  <path d="M50 80 L62 70 L80 66 L100 69 L128 62 L128 80 Z" fill="#23323a" opacity=".8"/>
  <path d="M107 78 L201 72 L201 150 L107 150 Z" fill="url(#t3low)"/>
  <!-- shield -->
  <path d="M0 8.5 L40 19 C44 38 46 54 47.7 69 L0 69 Z" fill="#d8d8d8"/>
  <path d="M0 12 L37.5 21.5 C41 38 43 54 44.5 69 L0 69 Z" fill="#e24428"/>
  <path d="M0 12 L8 14 C8 40 6 56 5 69 L0 69 Z" fill="#c8301c"/>
  <path d="M4 69 C6 60 12 56 18 55 C16 46 12 38 12 30 C18 38 22 46 22 54 C28 56 33 62 35 69 Z" fill="#f29a1e"/>
  <circle cx="22" cy="66" r="6" fill="#f6b628"/>
  <!-- grass photo -->
  <rect x="0" y="69" width="107" height="81" fill="#222a1a"/>
  <rect x="0" y="69" width="107" height="81" filter="url(#t3tex)"/>
  <!-- gloves -->
  <path d="M26.5 108 L42 101 L40 116.5 L30 116 Z" fill="#dcdcdc"/>
  <path d="M40 100 C44 96 50 92 55 90 C58 89 60 91 57 93 L53 96 C57 95 62 95 60 98 L54 101 C58 101 60 103 57 105 L52 107 C48 111 44 114 40 114 Z" fill="#d6b458"/>
  <path d="M39 121 L50 116 L53 128 L43 130 Z" fill="#dedede"/>
  <path d="M48 116 C54 111 62 108 70 106 C74 105 76 107 73 109 L68 112 C72 112 78 112 76 115 L70 117 C74 118 76 120 72 122 L64 124 C58 126 52 127 50 126 Z" fill="#d9b85c"/>
  <g fill="#fff" font-family="Liberation Serif, serif" text-anchor="end">
    <text x="188" y="43.6" font-size="14.6" font-weight="bold" textLength="140" lengthAdjust="spacingAndGlyphs">European Knights</text>
    <text x="188" y="59.2" font-size="12.6" textLength="115" lengthAdjust="spacingAndGlyphs">(XII-XVI centuries)</text>
    <text x="192" y="94.9" font-size="13.4" textLength="69" lengthAdjust="spacingAndGlyphs">threw a glove</text>
    <text x="192" y="110.5" font-size="13.4" textLength="84" lengthAdjust="spacingAndGlyphs">n the rival’s face</text>
  </g>
</svg>

<!-- THUMB 4 -->
<svg style="left:75px;top:650px;overflow:hidden" width="201" height="32" viewBox="0 0 201 32">
  <defs>
    <linearGradient id="t4bg" x1="0" y1="0" x2="1" y2="0.2">
      <stop offset="0" stop-color="#b48408"/><stop offset="0.4" stop-color="#8e5a0a"/><stop offset="0.7" stop-color="#4e2408"/><stop offset="1" stop-color="#301404"/>
    </linearGradient>
    <filter id="t4rag" x="-10%" y="-10%" width="120%" height="130%">
      <feTurbulence type="fractalNoise" baseFrequency="0.25" numOctaves="2" seed="11" result="n"/>
      <feDisplacementMap in="SourceGraphic" in2="n" scale="7"/>
    </filter>
  </defs>
  <rect width="201" height="32" fill="url(#t4bg)"/>
  <g filter="url(#t4rag)" fill="#5e0c06">
    <path d="M4 12 C6 4 24 0 44 2 C54 -1 70 -1 90 1 C104 2 114 6 111 14 C106 20 90 19 78 17 C74 22 72 28 71 32 L64 32 C65 26 64 22 60 19 C54 22 50 28 48 32 L42 32 C46 26 47 21 44 19 C34 20 16 22 8 19 C3 17 3 14 4 12 Z"/>
    <path d="M52 19 L50 32 M80 16 L86 32 M90 15 L96 32 M36 18 L30 32" stroke="#5e0c06" stroke-width="3" fill="none"/>
  </g>
</svg>

<!-- canvas scrollbar -->
<div class="a" style="left:1184px;top:124px;width:13px;height:13px;border:1px solid #d0d0d0;background:#f1f1f1"></div>
<svg style="left:1187px;top:128px" width="7" height="4" viewBox="0 0 7 4"><path d="M0 4 L3.5 0 L7 4Z" fill="#a8a8a8"/></svg>
<div class="a" style="left:1184px;top:139px;width:13px;height:58px;border:1px solid #d0d0d0;background:#f1f1f1"></div>
<div class="a" style="left:1188px;top:160px;width:5px;height:12px;background:repeating-linear-gradient(#c6c6c6 0 1px,transparent 1px 2px)"></div>
<div class="a" style="left:1184px;top:612px;width:13px;height:13px;border:1px solid #d0d0d0;background:#f1f1f1"></div>
<svg style="left:1187px;top:617px" width="7" height="4" viewBox="0 0 7 4"><path d="M0 0 L3.5 4 L7 0Z" fill="#a8a8a8"/></svg>

<!-- notes -->
<div class="a" style="left:322px;top:656.7px;font-size:16px;color:#111;white-space:nowrap">Klicken Sie, um Notizen hinzuzufügen</div>
<div class="a" style="left:1184px;top:646px;width:13px;height:13px;border:1px solid #d0d0d0;background:#f1f1f1"></div>
<svg style="left:1187px;top:650px" width="7" height="4" viewBox="0 0 7 4"><path d="M0 4 L3.5 0 L7 4Z" fill="#a8a8a8"/></svg>
<div class="a" style="left:1184px;top:660px;width:13px;height:8px;border:1px solid #d0d0d0;background:#f1f1f1"></div>
<div class="a" style="left:1184px;top:669px;width:13px;height:13px;border:1px solid #d0d0d0;background:#f1f1f1"></div>
<svg style="left:1187px;top:674px" width="7" height="4" viewBox="0 0 7 4"><path d="M0 0 L3.5 4 L7 0Z" fill="#a8a8a8"/></svg>

<!-- RIGHT PANEL ICONS -->
<svg style="left:1213px;top:146px" width="14" height="14" viewBox="0 0 14 14" fill="none" stroke="#333">
  <rect x="0.65" y="0.65" width="12.7" height="12.7" stroke-width="1.3"/><rect x="2.9" y="3.5" width="8.2" height="6.6" stroke-width="1.2"/>
</svg>
<svg style="left:1213px;top:184px" width="15" height="15" viewBox="0 0 15 15" fill="none" stroke="#999">
  <path d="M3.8 8.5 H0.5 V0.5 H8.5 V3.8"/><circle cx="9.2" cy="9.2" r="4.6"/>
</svg>
<svg style="left:1213px;top:222px" width="14" height="14" viewBox="0 0 14 14" fill="none" stroke="#999">
  <rect x="0.5" y="0.5" width="13" height="13"/><circle cx="3.5" cy="3.5" r="1"/><path d="M0.5 10.5 L4 7.5 L6.5 9.5 L10 5.5 L13.5 9"/>
</svg>
<div class="a" style="left:1213px;top:256px;width:14px;text-align:center;font-size:15px;color:#999;font-weight:bold">¶</div>
<svg style="left:1212px;top:299px" width="16" height="12" viewBox="0 0 16 12" fill="none" stroke="#999">
  <rect x="0.5" y="0.5" width="15" height="11"/><rect x="0.5" y="0.5" width="15" height="2" fill="#999"/><path d="M0.5 6 H15.5 M0.5 9 H15.5 M5.5 2.5 V11.5 M10.5 2.5 V11.5"/>
</svg>
<svg style="left:1213px;top:336px" width="14" height="14" viewBox="0 0 14 14" fill="none" stroke="#999">
  <rect x="0.5" y="8.5" width="3" height="5"/><rect x="5.5" y="5.5" width="3" height="8"/><rect x="10.5" y="0.5" width="3" height="13"/>
</svg>
<svg style="left:1213px;top:372px" width="14" height="17" viewBox="0 0 14 17" fill="none" stroke="#999">
  <path d="M0.5 0.8 H7 M3.8 0.8 V10"/><path d="M7.5 5.5 C8 4.7 9 4.3 10 4.3 C11.5 4.3 12.5 5 12.5 6.3 V10 M12.5 7.3 C11 7.3 8 7.3 8 9 C8 10.5 10 10.7 11 10.2 C12 9.7 12.5 9 12.5 8"/><path d="M1 16 C4 13 10 13 13 16"/>
</svg>

<!-- STATUS BAR -->
<svg style="left:14px;top:689px" width="14" height="13" viewBox="0 0 14 13" fill="none" stroke="#333">
  <rect x="0.5" y="0.5" width="13" height="12"/><path d="M4.5 3 L10 6.5 L4.5 10 Z" fill="#333"/>
</svg>
<svg class="chev" style="left:32px;top:693px" viewBox="0 0 8 5" fill="none" stroke="#777"><path d="M1 1 L4 4 L7 1"/></svg>
<div class="a" style="left:50px;top:690px;font-size:11px;font-weight:bold;color:#444;white-space:nowrap">Folie 1 von 8</div>
<div class="a" style="left:799px;top:690px;font-size:11px;font-weight:bold;color:#b0b0b0;white-space:nowrap">English – United States</div>
<svg class="chev" style="left:929px;top:693px" viewBox="0 0 8 5" fill="none" stroke="#bbb"><path d="M1 1 L4 4 L7 1"/></svg>
<svg style="left:945px;top:688px" width="15" height="15" viewBox="0 0 15 15" fill="none" stroke="#333" stroke-width="1.1">
  <circle cx="7.5" cy="7.5" r="6.8"/><ellipse cx="7.5" cy="7.5" rx="3" ry="6.8"/><path d="M7.5 0.7 V14.3 M1 5 H14 M1 10 H14"/>
</svg>
<div class="a" style="left:972px;top:685px;width:20px;height:20px;background:#7e868d"></div>
<svg style="left:972px;top:685px" width="20" height="20" viewBox="0 0 20 20" fill="none" stroke="#fff" stroke-width="1.3">
  <path d="M3.6 11 V6 Q3.6 4.6 5 4.6 H5.6 Q7 4.6 7 6 V11 M3.6 8 H7"/>
  <path d="M9 11 V4.6 H11.2 Q12.6 4.6 12.6 6 Q12.6 7.6 11 7.6 H9 M11 7.6 Q12.8 7.6 12.8 9.3 Q12.8 11 11.2 11 H9"/>
  <path d="M17.5 5.6 Q17.2 4.6 16 4.6 Q14.6 4.6 14.6 6 V11"/>
  <path d="M8.6 13 L11.4 16.4 L17.6 9" stroke-width="1.5"/>
</svg>
<div class="a" style="left:1001px;top:683px;width:1px;height:23px;background:#d6d6d6"></div>
<div class="a" style="left:1011px;top:685px;width:20px;height:20px;background:#7e868d"></div>
<svg style="left:1011px;top:685px" width="20" height="20" viewBox="0 0 20 20" fill="none" stroke="#fff" stroke-width="1">
  <rect x="3.5" y="4.5" width="13" height="11"/>
  <path d="M10 6 V8.5 M10 13.8 V11.5 M5 10 H7.5 M15 10 H12.5" stroke-width="1"/>
  <path d="M8.8 7.2 L10 8.6 L11.2 7.2 M8.8 12.8 L10 11.4 L11.2 12.8 M6.3 8.8 L7.7 10 L6.3 11.2 M13.7 8.8 L12.3 10 L13.7 11.2" stroke-width="1"/>
</svg>
<svg style="left:1043px;top:688px" width="17" height="14" viewBox="0 0 17 14" fill="none" stroke="#333" stroke-width="1.1">
  <path d="M0.6 1 V13 M16.4 1 V13 M3 7 H14 M5 5 L3 7 L5 9 M12 5 L14 7 L12 9"/>
</svg>
<div class="a" style="left:1077px;top:695px;width:11px;height:1px;background:#333"></div>
<div class="a" style="left:1108px;top:690px;font-size:11px;font-weight:bold;color:#444;white-space:nowrap">Zoom 62%</div>
<svg style="left:1183px;top:689px" width="13" height="13" viewBox="0 0 13 13" fill="none" stroke="#333" stroke-width="1.1"><path d="M6.5 0.5 V12.5 M0.5 6.5 H12.5"/></svg>


</body></html>
